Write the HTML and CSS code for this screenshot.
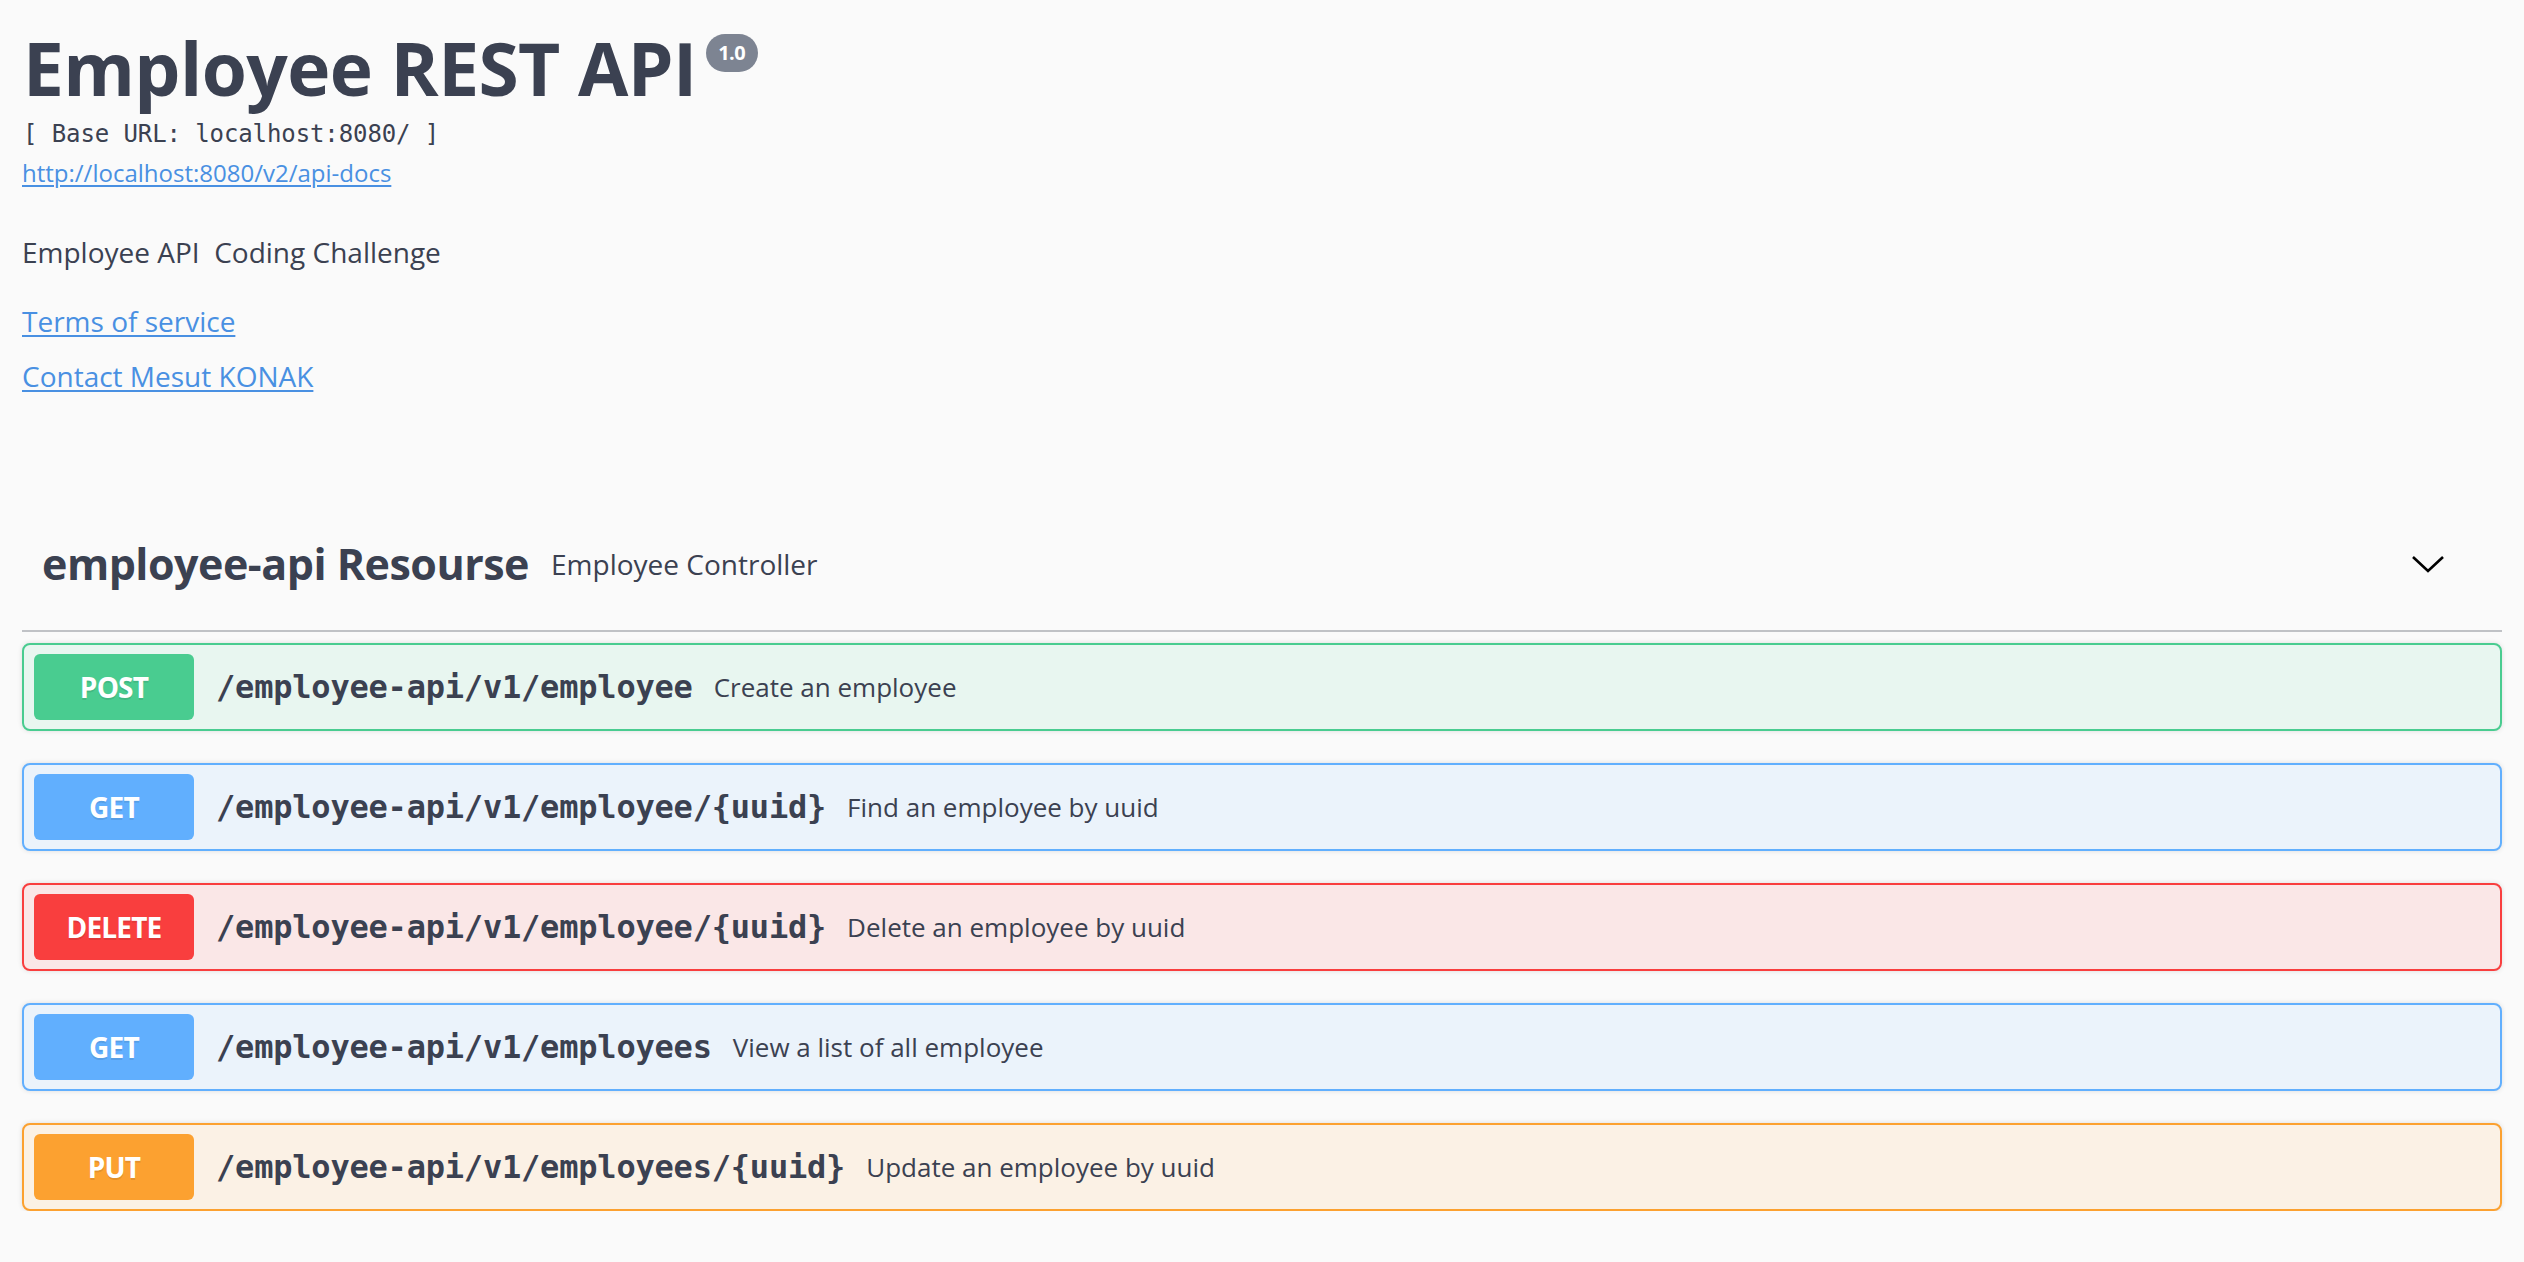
FILE: index.html
```html
<!DOCTYPE html>
<html lang="en">
<head>
<meta charset="utf-8">
<title>Employee REST API</title>
<link rel="stylesheet" href="styles.css">
</head>
<body>
<div class="wrapper">
  <section class="info">
    <div class="title-row">
      <h2 class="title">Employee REST API</h2>
      <span class="version">1.0</span>
    </div>
    <pre class="base-url">[ Base URL: localhost:8080/ ]</pre>
    <a class="link url" href="#">http://localhost:8080/v2/api-docs</a>
    <p class="description">Employee API&nbsp; Coding Challenge</p>
    <a class="link big terms" href="#">Terms of service</a>
    <a class="link big contact" href="#">Contact Mesut KONAK</a>
  </section>

  <section class="tag">
    <div class="tag-header">
      <h4 class="tag-name">employee-api Resourse</h4>
      <span class="tag-desc">Employee Controller</span>
      <span class="spacer"></span>
      <button class="expand" type="button" aria-label="collapse">
        <svg width="34" height="18" viewBox="0 0 34 18"><polyline points="2,2 17,16 32,2" fill="none" stroke="#000" stroke-width="2.6" stroke-linejoin="miter"/></svg>
      </button>
    </div>

    <div class="ops">
      <div class="op op-post">
        <span class="method">POST</span>
        <span class="path">/employee-api/v1/employee</span>
        <span class="summary">Create an employee</span>
      </div>
      <div class="op op-get">
        <span class="method">GET</span>
        <span class="path">/employee-api/v1/employee/{uuid}</span>
        <span class="summary">Find an employee by uuid</span>
      </div>
      <div class="op op-delete">
        <span class="method">DELETE</span>
        <span class="path">/employee-api/v1/employee/{uuid}</span>
        <span class="summary">Delete an employee by uuid</span>
      </div>
      <div class="op op-get">
        <span class="method">GET</span>
        <span class="path">/employee-api/v1/employees</span>
        <span class="summary">View a list of all employee</span>
      </div>
      <div class="op op-put">
        <span class="method">PUT</span>
        <span class="path">/employee-api/v1/employees/{uuid}</span>
        <span class="summary">Update an employee by uuid</span>
      </div>
    </div>
  </section>
</div>
</body>
</html>
```

FILE: styles.css
```css
html, body {
  margin: 0;
  padding: 0;
  background: #fafafa;
  color: #3b4151;
  font-family: "Open Sans", "Noto Sans", sans-serif;
}

.wrapper {
  padding: 31px 22px 0 22px;
}

.info {
  display: flex;
  flex-direction: column;
  align-items: flex-start;
}

.title-row {
  display: flex;
  align-items: flex-start;
}

.title {
  margin: 0;
  font-size: 73px;
  line-height: 74px;
  font-weight: 700;
  color: #3b4151;
  padding-left: 1px;
  letter-spacing: -0.6px;
}

.version {
  margin-left: 9px;
  margin-top: 3px;
  height: 38px;
  width: 52px;
  border-radius: 19px;
  background: #7d8492;
  color: #fff;
  font-size: 20px;
  font-weight: 700;
  line-height: 38px;
  text-align: center;
  letter-spacing: -0.5px;
}

.base-url {
  margin: 17px 0 0 1px;
  font-family: "DejaVu Sans Mono", "Liberation Mono", monospace;
  font-size: 24px;
  line-height: 24px;
  color: #3b4151;
  font-weight: 400;
  letter-spacing: -0.1px;
}

.link {
  color: #4990e2;
  text-decoration: underline;
  text-decoration-thickness: 2px;
  text-underline-offset: 3px;
}

.url {
  margin-top: 15px;
  font-size: 24px;
  line-height: 24px;
}

.description {
  margin: 53px 0 0 0;
  font-size: 28px;
  line-height: 28px;
}

.big {
  font-size: 28px;
  line-height: 28px;
}

.terms {
  margin-top: 41px;
}

.contact {
  margin-top: 27px;
}

.tag {
  margin-top: 108px;
}

.tag-header {
  display: flex;
  align-items: center;
  min-height: 92px;
  padding: 20px 40px 20px 20px;
  border-bottom: 2px solid rgba(59, 65, 81, 0.3);
}

.tag-name {
  margin: 0;
  font-size: 43px;
  line-height: 44px;
  font-weight: 700;
  color: #3b4151;
  letter-spacing: -0.5px;
}

.tag-desc {
  margin-left: 22px;
  font-size: 28px;
  line-height: 28px;
  color: #3b4151;
}

.spacer {
  flex: 1;
}

.expand {
  border: none;
  background: none;
  padding: 0;
  margin-right: 17px;
  display: flex;
  align-items: center;
}

.ops {
  margin-top: 11px;
  display: flex;
  flex-direction: column;
  gap: 32px;
}

.op {
  display: flex;
  align-items: center;
  border: 2px solid;
  border-radius: 8px;
  padding: 9px 10px;
  box-shadow: 0 0 5px rgba(0, 0, 0, 0.12);
}

.method {
  width: 160px;
  height: 66px;
  border-radius: 6px;
  color: #fff;
  font-size: 28px;
  font-weight: 700;
  display: flex;
  align-items: center;
  justify-content: center;
  text-shadow: 0 2px 0 rgba(0, 0, 0, 0.1);
  letter-spacing: -0.8px;
}

.path {
  margin-left: 22px;
  font-family: "DejaVu Sans Mono", "Liberation Mono", monospace;
  font-weight: 700;
  font-size: 32px;
  color: #3b4151;
  letter-spacing: -0.2px;
}

.summary {
  margin-left: 21px;
  font-size: 26px;
  color: #3b4151;
}

.op-post { border-color: #49cc90; background: #e8f6f0; }
.op-post .method { background: #49cc90; }

.op-get { border-color: #61affe; background: #ebf3fb; }
.op-get .method { background: #61affe; }

.op-delete { border-color: #f93e3e; background: #fae7e7; }
.op-delete .method { background: #f93e3e; }

.op-put { border-color: #fca130; background: #fbf1e5; }
.op-put .method { background: #fca130; }
```
